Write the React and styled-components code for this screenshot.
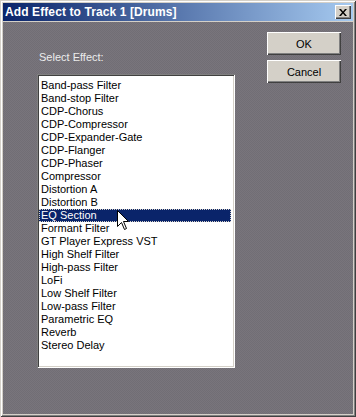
import React from 'react';
import styled, { createGlobalStyle } from 'styled-components';

const GlobalStyle = createGlobalStyle`
    html, body {
        margin: 0;
        padding: 0;
        background: #757178;
    }
    body {
        font-family: "Liberation Sans", Arial, sans-serif;
        font-size: 11px;
    }
`;

const face = '#d4d0c8';
const shadow = '#808080';
const darkShadow = '#404040';
const selected = '#0a246a';

const Window = styled.div`
    width: 356px;
    height: 417px;
    box-sizing: border-box;
    display: flex;
    flex-direction: column;
    gap: 1px;
    padding: 3px;
    background: ${face};
    box-shadow: inset 1px 1px 0 ${face}, inset -1px -1px 0 ${darkShadow},
        inset 2px 2px 0 #fff, inset -2px -2px 0 ${shadow};
`;

const TitleBar = styled.div`
    height: 18px;
    flex: none;
    display: flex;
    align-items: center;
    justify-content: space-between;
    padding: 0 2px 0 2px;
    background: linear-gradient(to right, ${selected}, #a6caf0);
`;

const Title = styled.span`
    color: #fff;
    font-weight: bold;
    font-size: 12px;
    letter-spacing: 0.1px;
    white-space: nowrap;
`;

const CloseButton = styled.div`
    width: 16px;
    height: 14px;
    box-sizing: border-box;
    background: ${face};
    display: flex;
    align-items: center;
    justify-content: center;
    box-shadow: inset 1px 1px 0 #fff, inset -1px -1px 0 ${darkShadow},
        inset -2px -2px 0 ${shadow};
    svg { display: block; }
`;

const Body = styled.div`
    flex: 1;
    display: flex;
    justify-content: space-between;
    align-items: flex-start;
    padding: 10px 12px 0 34px;
    background: repeating-conic-gradient(#716e75 0 25%, #79757c 0 50%) 0 0 / 2px 2px;
`;

const Column = styled.div`
    display: flex;
    flex-direction: column;
    gap: ${p => p.$gap || 0}px;
    margin-top: ${p => p.$top || 0}px;
`;

const Label = styled.div`
    color: #ececec;
    line-height: 13px;
    padding-left: 2px;
`;

const List = styled.div`
    position: relative;
    width: 198px;
    height: 294px;
    box-sizing: border-box;
    padding: 5px 4px 0 2px;
    background: #fff;
    box-shadow: inset 1px 1px 0 ${shadow}, inset -1px -1px 0 #fff,
        inset 2px 2px 0 ${darkShadow}, inset -2px -2px 0 ${face};
`;

const Item = styled.div`
    height: 13px;
    line-height: 13px;
    padding-left: 2px;
    white-space: nowrap;
    box-sizing: border-box;
    color: ${p => (p.$selected ? '#fff' : '#000')};
    background: ${p => (p.$selected ? selected : 'transparent')};
    outline: ${p => (p.$selected ? '1px dotted #d4d0c8' : 'none')};
    outline-offset: -1px;
`;

const Cursor = styled.svg`
    position: absolute;
    left: 80px;
    top: 136px;
`;

const Button = styled.div`
    width: 74px;
    height: 23px;
    box-sizing: border-box;
    display: flex;
    align-items: center;
    justify-content: center;
    background: ${face};
    color: #000;
    box-shadow: inset 1px 1px 0 #fff, inset -1px -1px 0 ${darkShadow},
        inset -2px -2px 0 ${shadow};
`;

const effects = [
    'Band-pass Filter',
    'Band-stop Filter',
    'CDP-Chorus',
    'CDP-Compressor',
    'CDP-Expander-Gate',
    'CDP-Flanger',
    'CDP-Phaser',
    'Compressor',
    'Distortion A',
    'Distortion B',
    'EQ Section',
    'Formant Filter',
    'GT Player Express VST',
    'High Shelf Filter',
    'High-pass Filter',
    'LoFi',
    'Low Shelf Filter',
    'Low-pass Filter',
    'Parametric EQ',
    'Reverb',
    'Stereo Delay',
];

const App = () => {
    return (
        <>
            <GlobalStyle />
            <Window>
                <TitleBar>
                    <Title>Add Effect to Track 1 [Drums]</Title>
                    <CloseButton>
                        <svg width="8" height="7" viewBox="0 0 8 7">
                            <path d="M0 0h2l2 2.5L6 0h2L5 3.5 8 7H6L4 4.5 2 7H0l3-3.5z" fill="#000" />
                        </svg>
                    </CloseButton>
                </TitleBar>
                <Body>
                    <Column $top={19} $gap={10}>
                        <Label>Select Effect:</Label>
                        <List>
                            {effects.map(name => (
                                <Item key={name} $selected={name === 'EQ Section'}>{name}</Item>
                            ))}
                            <Cursor width="13" height="21" viewBox="0 0 13 21">
                                <path d="M0.5 0.5V16.5L4.5 12.5L7.5 19.5L9.5 18.5L6.5 11.5H11.5Z"
                                    fill="#fff" stroke="#000" strokeWidth="1" strokeLinejoin="miter" />
                            </Cursor>
                        </List>
                    </Column>
                    <Column $gap={5}>
                        <Button>OK</Button>
                        <Button>Cancel</Button>
                    </Column>
                </Body>
            </Window>
        </>
    );
};

export default App;
